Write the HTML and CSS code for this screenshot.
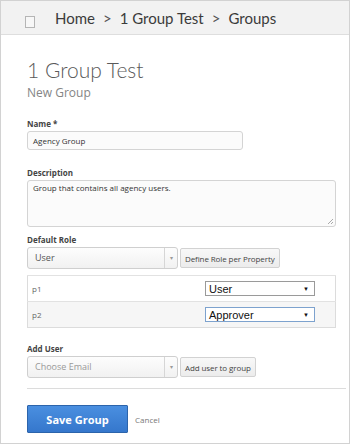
FILE: index.html
```html
<!DOCTYPE html>
<html lang="en">
<head>
    <meta charset="UTF-8">
    <title>New Group</title>
    <link rel="stylesheet" href="styles.css">
</head>
<body>
    <div class="frame">
        <div class="header">
            <span class="check"></span>
            <div class="crumbs">
                <span>Home</span><span class="sep">&gt;</span><span>1 Group Test</span><span class="sep">&gt;</span><span>Groups</span>
            </div>
        </div>

        <div class="content">
            <h1>1 Group Test</h1>
            <h2>New Group</h2>

            <label class="first">Name *</label>
            <div class="input name-input">Agency Group</div>

            <label class="desc-label">Description</label>
            <div class="input textarea">Group that contains all agency users.<span class="grip"></span></div>

            <label>Default Role</label>
            <div class="row">
                <div class="combo"><span>User</span><span class="combo-arrow">&#9662;</span></div>
                <button class="btn">Define Role per Property</button>
            </div>

            <table class="props">
                <tr>
                    <td>p1</td>
                    <td class="sel-cell"><div class="select"><span>User</span><span class="tri">&#9660;</span></div></td>
                </tr>
                <tr class="alt">
                    <td>p2</td>
                    <td class="sel-cell"><div class="select focus"><span>Approver</span><span class="tri">&#9660;</span></div></td>
                </tr>
            </table>

            <label class="add-label">Add User</label>
            <div class="row">
                <div class="combo"><span class="placeholder">Choose Email</span><span class="combo-arrow">&#9662;</span></div>
                <button class="btn">Add user to group</button>
            </div>

            <hr>

            <div class="actions">
                <button class="save">Save Group</button>
                <a class="cancel">Cancel</a>
            </div>
        </div>
    </div>
</body>
</html>
```

FILE: styles.css
```css
body {
    margin: 0;
    font-family: "Open Sans", Arial, sans-serif;
    background: white;
}
.frame {
    width: 350px;
    height: 444px;
    box-sizing: border-box;
    border: 1px solid #d2d2d2;
    overflow: hidden;
}
.header {
    display: flex;
    align-items: center;
    height: 33px;
    background: #f2f2f2;
    border-bottom: 1px solid #dedede;
    padding-left: 24px;
}
.check {
    width: 8px;
    height: 10px;
    border: 1px solid #b5b5b5;
    background: #f7f7f7;
    margin-top: 9px;
}
.crumbs {
    margin-left: 20px;
    font-family: Lato, "Open Sans", sans-serif;
    font-size: 15px;
    color: #3b3b3b;
}
.crumbs .sep {
    margin: 0 8px;
    color: #555;
}
.content {
    padding: 0 13px 0 26px;
}
h1 {
    font-family: Lato, "Open Sans", sans-serif;
    font-weight: 300;
    font-size: 21px;
    color: #5a5a5a;
    margin: 21px 0 0;
    line-height: 27px;
}
h2 {
    font-weight: 400;
    font-size: 12px;
    color: #858585;
    margin: 2px 0 0;
    line-height: 16px;
}
label {
    display: block;
    font-size: 8px;
    font-weight: 700;
    color: #444;
    margin-top: 8px;
    line-height: 10px;
}
label.first {
    margin-top: 18px;
}
label.desc-label {
    margin-top: 18px;
}
.input {
    position: relative;
    margin-top: 2px;
    border: 1px solid #d4d4d4;
    border-radius: 3px;
    background: #fbfbfb;
    font-size: 8px;
    color: #333;
    padding: 0 5px;
    box-sizing: border-box;
}
.name-input {
    width: 216px;
    height: 19px;
    line-height: 17px;
}
.textarea {
    width: 309px;
    height: 47px;
    line-height: 13px;
}
.grip {
    position: absolute;
    right: 2px;
    bottom: 2px;
    width: 5px;
    height: 5px;
    background: linear-gradient(135deg, transparent 45%, #aaa 45%, #aaa 55%, transparent 55%, transparent 75%, #aaa 75%, #aaa 85%, transparent 85%);
}
.row {
    display: flex;
    align-items: center;
    margin-top: 2px;
}
.combo {
    display: flex;
    width: 151px;
    height: 22px;
    box-sizing: border-box;
    border: 1px solid #cfcfcf;
    border-radius: 3px;
    background: linear-gradient(#fdfdfd, #f1f1f1);
    font-size: 9px;
    color: #555;
}
.combo span:first-child {
    flex: 1;
    line-height: 20px;
    padding-left: 7px;
}
.combo .placeholder {
    color: #999;
}
.combo-arrow {
    width: 12px;
    border-left: 1px solid #d6d6d6;
    font-size: 6px;
    color: #999;
    text-align: center;
    line-height: 20px;
}
.btn {
    margin-left: 2px;
    height: 20px;
    padding: 0 4px;
    font-family: "Open Sans", Arial, sans-serif;
    font-size: 8px;
    letter-spacing: -0.1px;
    color: #444;
    background: linear-gradient(#f8f8f8, #ececec);
    border: 1px solid #d2d2d2;
    border-radius: 2px;
}
.props {
    width: 309px;
    margin-top: 6px;
    border-collapse: collapse;
    border: 1px solid #dcdcdc;
    font-size: 8px;
    color: #666;
}
.props td {
    height: 25px;
    padding: 0 0 0 4px;
    border-top: 1px solid #e2e2e2;
}
.props .alt td {
    background: #f6f6f6;
}
.sel-cell {
    width: 130px;
}
.select {
    display: flex;
    align-items: center;
    width: 110px;
    height: 15px;
    box-sizing: border-box;
    border: 1px solid #9a9a9a;
    background: white;
    font-family: Arial, "Liberation Sans", sans-serif;
    font-size: 11px;
    color: #111;
    padding: 0 5px 0 3px;
}
.select span:first-child {
    flex: 1;
}
.select .tri {
    font-size: 6px;
}
.select.focus {
    border-color: #7da2ce;
}
.add-label {
    margin-top: 16px;
}
hr {
    border: none;
    border-top: 1px solid #dcdcdc;
    margin: 10px -10px 0 0;
}
.actions {
    display: flex;
    align-items: center;
    margin-top: 16px;
}
.save {
    width: 101px;
    height: 28px;
    background: linear-gradient(#4a8fe0, #3577cc);
    border: 1px solid #2c64ab;
    border-radius: 1px;
    color: white;
    font-family: "Open Sans", Arial, sans-serif;
    font-weight: 700;
    font-size: 11px;
}
.cancel {
    margin-left: 7px;
    font-size: 8px;
    color: #777;
}
```
